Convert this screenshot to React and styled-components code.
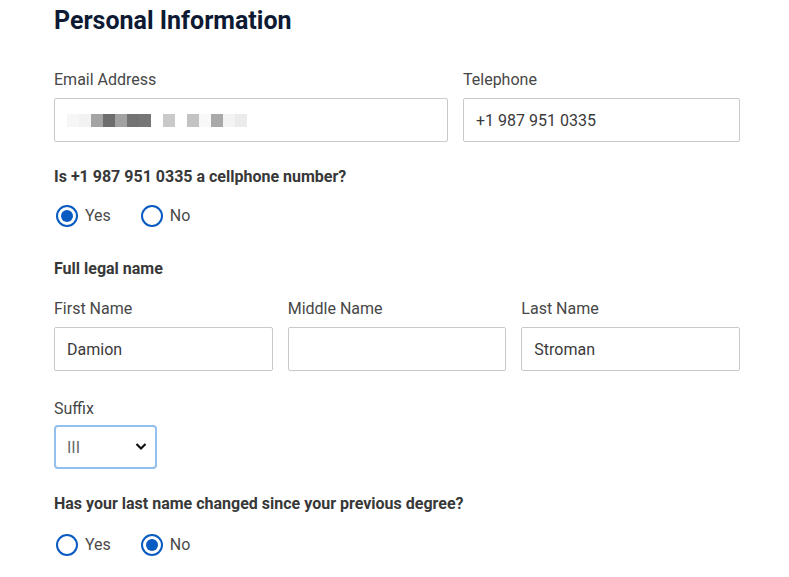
import React from "react";
import styled, { createGlobalStyle } from "styled-components";

const Global = createGlobalStyle`
  html, body { margin: 0; padding: 0; background: #fff; }
  body { font-family: Roboto, "Liberation Sans", Arial, sans-serif; -webkit-font-smoothing: antialiased; }
  * { box-sizing: border-box; }
`;

const Page = styled.div`
  width: 686px;
  margin-left: 54px;
  display: flex;
  flex-direction: column;
`;

const Title = styled.h1`
  margin: 6px 0 0;
  font-size: 25px;
  line-height: 30px;
  font-weight: 700;
  color: #0e1a33;
`;

const Grid = styled.div`
  display: grid;
  grid-template-columns: ${(p) => p.$cols};
  column-gap: 15px;
  margin-top: ${(p) => p.$mt}px;
`;

const Field = styled.div`
  display: flex;
  flex-direction: column;
  gap: ${(p) => p.$gap || 8}px;
  width: ${(p) => (p.$w ? `${p.$w}px` : "auto")};
  margin-top: ${(p) => p.$mt || 0}px;
`;

const Label = styled.label`
  font-size: 16px;
  line-height: 20px;
  color: #474747;
`;

const Input = styled.input`
  height: 44px;
  width: 100%;
  border: 1px solid #c9c9c9;
  border-radius: 2px;
  padding: 0 12px;
  font-family: inherit;
  font-size: 16px;
  color: #3a3a3a;
  background: #fff;
  outline: none;
`;

const MaskBox = styled.div`
  height: 44px;
  border: 1px solid #c9c9c9;
  border-radius: 2px;
  display: flex;
  align-items: center;
  padding-left: 12px;
`;

const Cell = styled.span`
  width: 12px;
  height: 13px;
  display: block;
`;

const Question = styled.div`
  margin-top: ${(p) => p.$mt}px;
  font-size: 16px;
  line-height: 20px;
  font-weight: 700;
  color: #383838;
`;

const RadioGroup = styled.div`
  display: flex;
  gap: 30px;
  margin-top: ${(p) => p.$mt}px;
  margin-left: 2px;
`;

const Option = styled.label`
  display: flex;
  align-items: center;
  gap: 7px;
  font-size: 16px;
  line-height: 22px;
  color: #4a4a4a;
`;

const Circle = styled.span`
  width: 22px;
  height: 22px;
  border-radius: 50%;
  border: 2px solid #0a5bc1;
  display: flex;
  align-items: center;
  justify-content: center;
  &::after {
    content: "";
    width: 12px;
    height: 12px;
    border-radius: 50%;
    background: #0a5bc1;
    display: ${(p) => (p.$on ? "block" : "none")};
  }
`;

const SelectWrap = styled.div`
  position: relative;
  height: 44px;
`;

const Select = styled.select`
  appearance: none;
  width: 100%;
  height: 44px;
  border: 2px solid #93c0ee;
  border-radius: 4px;
  padding: 0 0 0 11px;
  font-family: inherit;
  font-size: 16px;
  color: #6a6a6a;
  background: #fff;
  outline: none;
`;

const Chevron = styled.svg`
  position: absolute;
  right: 10px;
  top: 17px;
  pointer-events: none;
`;

const mask = [
  "#f6f6f6", "#f2f2f2", "#a4a4a4", "#6d6d6d", "#a2a2a2", "#737373", "#767676",
  "#ffffff", "#c9c9c9", "#ffffff", "#c3c3c3", "#f8f8f8", "#a9a9a9", "#f3f3f3", "#ebebeb",
];

function Radio({ checked, children }) {
  return (
    <Option>
      <Circle $on={checked} />
      {children}
    </Option>
  );
}

export default function App() {
  return (
    <>
      <Global />
      <Page>
        <Title>Personal Information</Title>
        <Grid $cols="394px 1fr" $mt={34}>
          <Field>
            <Label>Email Address</Label>
            <MaskBox>
              {mask.map((c, i) => (
                <Cell key={i} style={{ background: c }} />
              ))}
            </MaskBox>
          </Field>
          <Field>
            <Label>Telephone</Label>
            <Input readOnly value="+1 987 951 0335" />
          </Field>
        </Grid>

        <Question $mt={25}>Is +1 987 951 0335 a cellphone number?</Question>
        <RadioGroup $mt={18}>
          <Radio checked>Yes</Radio>
          <Radio>No</Radio>
        </RadioGroup>

        <Question $mt={32}>Full legal name</Question>
        <Grid $cols="1fr 1fr 1fr" $mt={20}>
          <Field>
            <Label>First Name</Label>
            <Input readOnly value="Damion" />
          </Field>
          <Field>
            <Label>Middle Name</Label>
            <Input readOnly value="" />
          </Field>
          <Field>
            <Label>Last Name</Label>
            <Input readOnly value="Stroman" />
          </Field>
        </Grid>

        <Field $w={103} $mt={28} $gap={6}>
          <Label>Suffix</Label>
          <SelectWrap>
            <Select defaultValue="III">
              <option>III</option>
            </Select>
            <Chevron width="12" height="9" viewBox="0 0 12 9">
              <path d="M1.5 2l4.5 4.5L10.5 2" fill="none" stroke="#111" strokeWidth="2.2" />
            </Chevron>
          </SelectWrap>
        </Field>

        <Question $mt={25}>Has your last name changed since your previous degree?</Question>
        <RadioGroup $mt={20}>
          <Radio>Yes</Radio>
          <Radio checked>No</Radio>
        </RadioGroup>
      </Page>
    </>
  );
}
